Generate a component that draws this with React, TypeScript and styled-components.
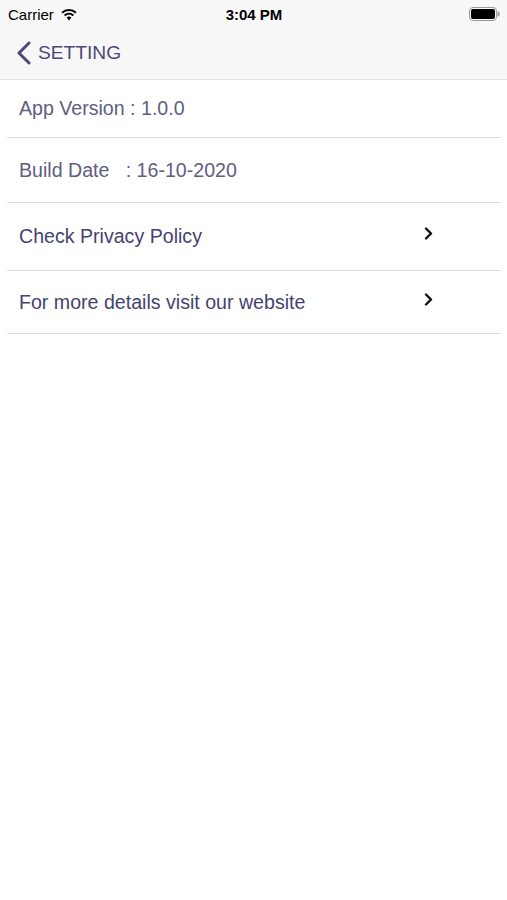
import React from "react";
import styled, { createGlobalStyle } from "styled-components";

const Global = createGlobalStyle`
  html, body { margin: 0; padding: 0; background: #ffffff; }
  body { font-family: "Liberation Sans", Arial, sans-serif; }
`;

const Screen = styled.div`
  width: 507px;
  height: 900px;
  background: #ffffff;
  display: flex;
  flex-direction: column;
`;

const Header = styled.div`
  background: #f7f7f7;
  border-bottom: 1px solid #e2e2e2;
  height: 79px;
  display: flex;
  flex-direction: column;
`;

const StatusBar = styled.div`
  height: 28px;
  display: grid;
  grid-template-columns: 1fr auto 1fr;
  align-items: center;
  padding: 0 7px 0 8px;
  color: #000;
  font-size: 15px;
`;

const Left = styled.div`
  display: flex;
  align-items: center;
  gap: 6px;
`;

const Time = styled.div`
  font-weight: 700;
  font-size: 15px;
`;

const Right = styled.div`
  display: flex;
  justify-content: flex-end;
  align-items: center;
`;

const NavBar = styled.div`
  flex: 1;
  display: flex;
  align-items: center;
  padding-left: 16px;
  gap: 6px;
  padding-bottom: 2px;
`;

const Title = styled.span`
  font-size: 19.2px;
  color: #4a4a78;
`;

const List = styled.div`
  display: flex;
  flex-direction: column;
  padding: 0 6px 0 7px;
`;

const Row = styled.div<{ $h: number }>`
  height: ${(p) => p.$h}px;
  border-bottom: 1px solid #dcdce4;
  display: flex;
  align-items: center;
  justify-content: space-between;
  padding-left: 12px;
  padding-right: 68px;
  box-sizing: border-box;
`;

const Label = styled.span<{ $link?: boolean }>`
  font-size: 19.6px;
  color: ${(p) => (p.$link ? "#434370" : "#5e5e80")};
  white-space: pre;
`;

const ChevronWrap = styled.span`
  display: flex;
  margin-top: -6px;
`;

const Chevron = () => (
  <ChevronWrap>
    <svg width="9" height="13" viewBox="0 0 9 13">
      <path d="M2 1.5 L7 6.5 L2 11.5" fill="none" stroke="#111" strokeWidth="2.4" strokeLinecap="round" strokeLinejoin="round" />
    </svg>
  </ChevronWrap>
);

export default function App() {
  return (
    <Screen>
      <Global />
      <Header>
        <StatusBar>
          <Left>
            <span>Carrier</span>
            <svg width="18" height="13" viewBox="0 0 18 13">
              <path d="M9 12.5 L6.6 9.6 A3.6 3.6 0 0 1 11.4 9.6 Z" fill="#000" />
              <path d="M4.6 7.4 A6.6 6.6 0 0 1 13.4 7.4" fill="none" stroke="#000" strokeWidth="2" />
              <path d="M2.1 4.8 A10 10 0 0 1 15.9 4.8" fill="none" stroke="#000" strokeWidth="2" />
            </svg>
          </Left>
          <Time>3:04 PM</Time>
          <Right>
            <svg width="31" height="14" viewBox="0 0 31 14">
              <rect x="0.5" y="0.5" width="27" height="13" rx="3.5" fill="none" stroke="#9a9a9a" strokeWidth="1" />
              <rect x="2" y="2" width="24" height="10" rx="2" fill="#000" />
              <rect x="28.5" y="4.5" width="2" height="5" rx="1" fill="#9a9a9a" />
            </svg>
          </Right>
        </StatusBar>
        <NavBar>
          <svg width="16" height="24" viewBox="0 0 16 24">
            <path d="M13 2 L3 12 L13 22" fill="none" stroke="#4a4a78" strokeWidth="3" strokeLinecap="round" strokeLinejoin="round" />
          </svg>
          <Title>SETTING</Title>
        </NavBar>
      </Header>
      <List>
        <Row $h={58}>
          <Label>App Version : 1.0.0</Label>
        </Row>
        <Row $h={65}>
          <Label>{"Build Date   : 16-10-2020"}</Label>
        </Row>
        <Row $h={68}>
          <Label $link>Check Privacy Policy</Label>
          <Chevron />
        </Row>
        <Row $h={63}>
          <Label $link>For more details visit our website</Label>
          <Chevron />
        </Row>
      </List>
    </Screen>
  );
}
